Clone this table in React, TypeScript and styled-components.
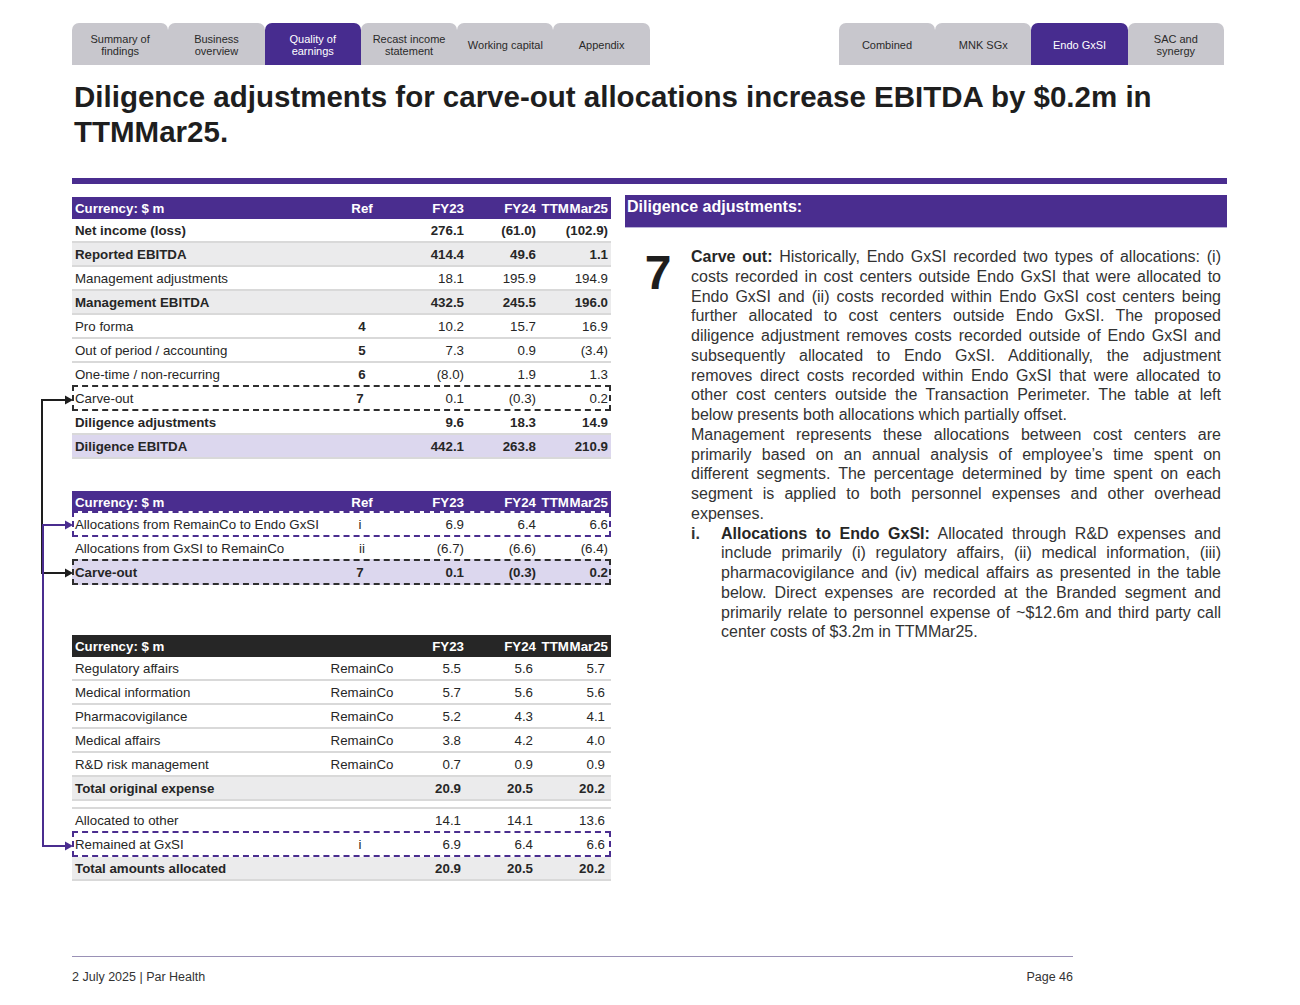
import React from 'react';
import styled, { createGlobalStyle, css } from 'styled-components';

const Global = createGlobalStyle`
  html, body { margin: 0; padding: 0; background: #ffffff; }
  body { font-family: "Liberation Sans", Arial, sans-serif; color: #2b2b2b; }
`;

const PURPLE = '#4a2d8f';
const LAVENDER = '#dcd7ee';
const GRAY = '#ebebec';
const SEP = '#d9d9d9';

const Page = styled.div`
  width: 1300px;
  height: 1005px;
  display: flex;
  flex-direction: column;
  box-sizing: border-box;
  overflow: hidden;
`;

const Nav = styled.nav`
  display: flex;
  justify-content: space-between;
  padding: 23px 76px 0 72px;
`;

const TabGroup = styled.div`
  display: flex;
`;

const Tab = styled.div<{ $active?: boolean }>`
  flex: 0 0 96.3px;
  height: 42px;
  display: flex;
  align-items: center;
  justify-content: center;
  text-align: center;
  font-size: 11px;
  line-height: 12px;
  border-radius: 7px 7px 0 0;
  background: ${p => (p.$active ? '#472c8f' : '#c8c7cd')};
  color: ${p => (p.$active ? '#ffffff' : '#2a2a2a')};
  padding-top: 2px;
  box-sizing: border-box;
`;

const Title = styled.h1`
  margin: 14px 0 0 74px;
  width: 1150px;
  font-size: 29.5px;
  line-height: 35px;
  font-weight: 700;
  color: #1e1e1e;
`;

const Rule = styled.div`
  margin: 29px 0 0 72px;
  width: 1155px;
  height: 6px;
  background: ${PURPLE};
`;

const Content = styled.div`
  display: flex;
  gap: 14px;
  margin: 11px 0 0 72px;
`;

const LeftCol = styled.div`
  position: relative;
  width: 539px;
  padding-top: 2px;
  display: flex;
  flex-direction: column;
`;

const Connectors = styled.svg`
  position: absolute;
  left: -34px;
  top: 0;
  overflow: visible;
`;

const Table = styled.div<{ $gap?: number; $numPad?: number }>`
  margin-top: ${p => p.$gap ?? 0}px;
  --num-pad: ${p => p.$numPad ?? 3}px;
  font-size: 13.3px;
  color: #262626;
`;

const HeadRow = styled.div<{ $dark?: boolean }>`
  display: grid;
  grid-template-columns: 1fr 46px 82px 72px 72px;
  height: 22px;
  align-items: center;
  background: ${p => (p.$dark ? '#262626' : PURPLE)};
  color: #ffffff;
  font-weight: 700;
`;

type Tone = 'plain' | 'gray' | 'lavender';

const Row = styled.div<{ $tone?: Tone; $bold?: boolean; $dash?: string; $topLine?: boolean }>`
  display: grid;
  grid-template-columns: 1fr 46px 82px 72px 72px;
  height: 24px;
  box-sizing: border-box;
  align-items: center;
  font-weight: ${p => (p.$bold ? 700 : 400)};
  background: ${p =>
    p.$tone === 'gray' ? GRAY : p.$tone === 'lavender' ? LAVENDER : '#ffffff'};
  border-bottom: 2px solid ${SEP};
  ${p =>
    p.$topLine &&
    css`
      border-top: 2px solid ${SEP};
      height: 26px;
    `}
  ${p =>
    p.$dash &&
    css`
      border: 2px dashed ${p.$dash};
      margin-top: -2px;
      height: 26px;
      --edge: 2px;
    `}
`;

const Gap = styled.div<{ $h: number }>`
  height: ${p => p.$h}px;
`;

const Label = styled.div`
  padding-left: calc(3px - var(--edge, 0px));
  white-space: nowrap;
  overflow: visible;
`;

const Ref = styled.div<{ $bold?: boolean }>`
  display: flex;
  justify-content: center;
  white-space: nowrap;
  font-weight: ${p => (p.$bold ? 700 : 'inherit')};
`;

const Num = styled.div`
  text-align: right;
  padding-right: calc(var(--num-pad) - var(--edge, 0px));
  white-space: nowrap;
`;

const HeadNum = styled.div`
  text-align: right;
  padding-right: 3px;
  white-space: nowrap;
  word-spacing: -3px;
`;

const RightCol = styled.div`
  width: 602px;
  display: flex;
  flex-direction: column;
`;

const PanelHead = styled.div`
  height: 32px;
  background: ${PURPLE};
  color: #ffffff;
  font-weight: 700;
  font-size: 16px;
  line-height: 24px;
  padding: 0 2px;
  border-bottom: 1px solid #b9b1d6;
`;

const Point = styled.div`
  display: grid;
  grid-template-columns: 66px 1fr;
  margin-top: 19px;
  padding-right: 6px;
`;

const BigNum = styled.div`
  font-size: 48px;
  line-height: 48px;
  font-weight: 700;
  text-align: center;
  color: #1e1e1e;
  margin-top: 2px;
`;

const Body = styled.div`
  font-size: 16px;
  line-height: 19.75px;
  color: #333333;
`;

const Para = styled.p`
  margin: 0;
  text-align: justify;
`;

const Lead = styled.strong`
  font-weight: 700;
  color: #262626;
`;

const ListItem = styled.div`
  display: grid;
  grid-template-columns: 30px 1fr;
`;

const Marker = styled.span`
  font-weight: 700;
`;

const Footer = styled.footer`
  margin: auto 0 20px 72px;
  width: 1001px;
  border-top: 1px solid #9a91b6;
  padding-top: 12px;
  display: flex;
  justify-content: space-between;
  font-size: 12.5px;
  line-height: 16px;
  color: #333333;
`;

type Line = {
  label: string;
  ref?: string;
  refBold?: boolean;
  v: [string, string, string];
  tone?: Tone;
  bold?: boolean;
  dash?: string;
  topLine?: boolean;
  gapBefore?: number;
};

const DARK_DASH = '#2e2e2e';
const PURPLE_DASH = '#4a2d8f';

const table1: Line[] = [
  { label: 'Net income (loss)', v: ['276.1', '(61.0)', '(102.9)'], bold: true },
  { label: 'Reported EBITDA', v: ['414.4', '49.6', '1.1'], bold: true, tone: 'gray' },
  { label: 'Management adjustments', v: ['18.1', '195.9', '194.9'] },
  { label: 'Management EBITDA', v: ['432.5', '245.5', '196.0'], bold: true, tone: 'gray' },
  { label: 'Pro forma', ref: '4', refBold: true, v: ['10.2', '15.7', '16.9'] },
  { label: 'Out of period / accounting', ref: '5', refBold: true, v: ['7.3', '0.9', '(3.4)'] },
  { label: 'One-time / non-recurring', ref: '6', refBold: true, v: ['(8.0)', '1.9', '1.3'] },
  { label: 'Carve-out', ref: '7', refBold: true, v: ['0.1', '(0.3)', '0.2'], dash: DARK_DASH },
  { label: 'Diligence adjustments', v: ['9.6', '18.3', '14.9'], bold: true },
  { label: 'Diligence EBITDA', v: ['442.1', '263.8', '210.9'], bold: true, tone: 'lavender' },
];

const table2: Line[] = [
  { label: 'Allocations from RemainCo to Endo GxSI', ref: 'i', v: ['6.9', '6.4', '6.6'], dash: PURPLE_DASH },
  { label: 'Allocations from GxSI to RemainCo', ref: 'ii', v: ['(6.7)', '(6.6)', '(6.4)'] },
  { label: 'Carve-out', ref: '7', v: ['0.1', '(0.3)', '0.2'], bold: true, tone: 'lavender', dash: DARK_DASH },
];

const table3: Line[] = [
  { label: 'Regulatory affairs', ref: 'RemainCo', v: ['5.5', '5.6', '5.7'] },
  { label: 'Medical information', ref: 'RemainCo', v: ['5.7', '5.6', '5.6'] },
  { label: 'Pharmacovigilance', ref: 'RemainCo', v: ['5.2', '4.3', '4.1'] },
  { label: 'Medical affairs', ref: 'RemainCo', v: ['3.8', '4.2', '4.0'] },
  { label: 'R&D risk management', ref: 'RemainCo', v: ['0.7', '0.9', '0.9'] },
  { label: 'Total original expense', v: ['20.9', '20.5', '20.2'], bold: true, tone: 'gray' },
  { label: 'Allocated to other', v: ['14.1', '14.1', '13.6'], topLine: true, gapBefore: 8 },
  { label: 'Remained at GxSI', ref: 'i', v: ['6.9', '6.4', '6.6'], dash: PURPLE_DASH },
  { label: 'Total amounts allocated', v: ['20.9', '20.5', '20.2'], bold: true, tone: 'gray' },
];

function DataTable({
  rows,
  refHead,
  dark,
  gap,
  numPad,
}: {
  rows: Line[];
  refHead: string;
  dark?: boolean;
  gap?: number;
  numPad?: number;
}) {
  return (
    <Table $gap={gap} $numPad={numPad}>
      <HeadRow $dark={dark}>
        <Label>Currency: $ m</Label>
        <Ref>{refHead}</Ref>
        <HeadNum>FY23</HeadNum>
        <HeadNum>FY24</HeadNum>
        <HeadNum>TTM Mar25</HeadNum>
      </HeadRow>
      {rows.map((r, i) => (
        <React.Fragment key={i}>
          {r.gapBefore ? <Gap $h={r.gapBefore - 2} /> : null}
          <Row $tone={r.tone} $bold={r.bold} $dash={r.dash} $topLine={r.topLine}>
            <Label>{r.label}</Label>
            <Ref $bold={r.refBold}>{r.ref ?? ''}</Ref>
            <Num>{r.v[0]}</Num>
            <Num>{r.v[1]}</Num>
            <Num>{r.v[2]}</Num>
          </Row>
        </React.Fragment>
      ))}
    </Table>
  );
}

function Arrow({ y, color }: { y: number; color: string }) {
  return <polygon points={`35,${y} 27,${y - 4.5} 27,${y + 4.5}`} fill={color} />;
}

function TabLabel({ lines }: { lines: string[] }) {
  return (
    <span>
      {lines.map((l, j) => (
        <React.Fragment key={j}>
          {j > 0 && <br />}
          {l}
        </React.Fragment>
      ))}
    </span>
  );
}

export default function App() {
  const leftTabs = [
    ['Summary of', 'findings'],
    ['Business', 'overview'],
    ['Quality of', 'earnings'],
    ['Recast income', 'statement'],
    ['Working capital'],
    ['Appendix'],
  ];
  const rightTabs = [['Combined'], ['MNK SGx'], ['Endo GxSI'], ['SAC and', 'synergy']];

  return (
    <Page>
      <Global />
      <Nav>
        <TabGroup>
          {leftTabs.map((t, i) => (
            <Tab key={i} $active={i === 2}>
              <TabLabel lines={t} />
            </Tab>
          ))}
        </TabGroup>
        <TabGroup>
          {rightTabs.map((t, i) => (
            <Tab key={i} $active={i === 2}>
              <TabLabel lines={t} />
            </Tab>
          ))}
        </TabGroup>
      </Nav>

      <Title>
        Diligence adjustments for carve-out allocations increase EBITDA by $0.2m in TTMMar25.
      </Title>

      <Rule />

      <Content>
        <LeftCol>
          <Connectors width="36" height="700" viewBox="0 0 36 700">
            <path d="M28 205 H4 V378 H28" fill="none" stroke="#1e1e1e" strokeWidth="2" />
            <Arrow y={205} color="#1e1e1e" />
            <Arrow y={378} color="#1e1e1e" />
            <path d="M28 330 H5 V651 H28" fill="none" stroke={PURPLE} strokeWidth="2" />
            <Arrow y={330} color={PURPLE} />
            <Arrow y={651} color={PURPLE} />
          </Connectors>
          <DataTable rows={table1} refHead="Ref" />
          <DataTable rows={table2} refHead="Ref" gap={32} />
          <DataTable rows={table3} refHead="" dark gap={50} numPad={6} />
        </LeftCol>

        <RightCol>
          <PanelHead>Diligence adjustments:</PanelHead>
          <Point>
            <BigNum>7</BigNum>
            <Body>
              <Para>
                <Lead>Carve out:</Lead> Historically, Endo GxSI recorded two types of allocations: (i)
                costs recorded in cost centers outside Endo GxSI that were allocated to Endo GxSI and
                (ii) costs recorded within Endo GxSI cost centers being further allocated to cost
                centers outside Endo GxSI. The proposed diligence adjustment removes costs recorded
                outside of Endo GxSI and subsequently allocated to Endo GxSI. Additionally, the
                adjustment removes direct costs recorded within Endo GxSI that were allocated to other
                cost centers outside the Transaction Perimeter. The table at left below presents both
                allocations which partially offset.
              </Para>
              <Para>
                Management represents these allocations between cost centers are primarily based on an
                annual analysis of employee’s time spent on different segments. The percentage
                determined by time spent on each segment is applied to both personnel expenses and other
                overhead expenses.
              </Para>
              <ListItem>
                <Marker>i.</Marker>
                <Para>
                  <Lead>Allocations to Endo GxSI:</Lead> Allocated through R&amp;D expenses and include
                  primarily (i) regulatory affairs, (ii) medical information, (iii) pharmacovigilance and
                  (iv) medical affairs as presented in the table below. Direct expenses are recorded at
                  the Branded segment and primarily relate to personnel expense of ~$12.6m and third
                  party call center costs of $3.2m in TTMMar25.
                </Para>
              </ListItem>
            </Body>
          </Point>
        </RightCol>
      </Content>

      <Footer>
        <span>2 July 2025 | Par Health</span>
        <span>Page 46</span>
      </Footer>
    </Page>
  );
}
